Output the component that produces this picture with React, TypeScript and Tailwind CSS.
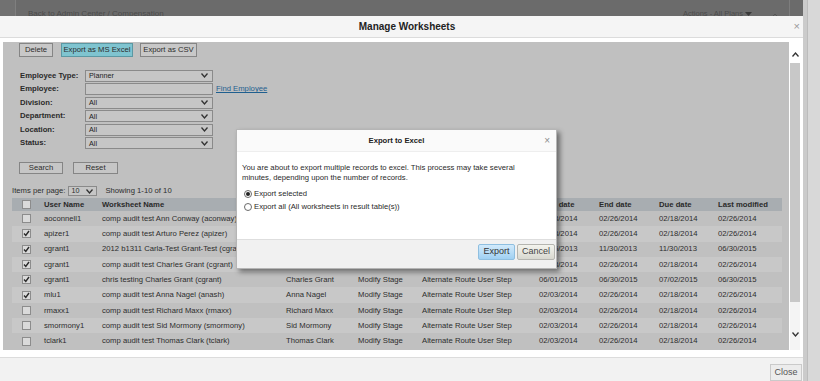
import React from "react";

const Chevron = ({ up = false, cls = "" }: { up?: boolean; cls?: string }) => (
  <svg width="7" height="5" viewBox="0 0 7 5" className={cls}>
    <polyline
      points={up ? "0.5,4.5 3.5,1 6.5,4.5" : "0.5,0.5 3.5,4 6.5,0.5"}
      fill="none"
      stroke="#333"
      strokeWidth="1.3"
    />
  </svg>
);

const Check = ({ checked }: { checked: boolean }) => (
  <div className="w-[9px] h-[9px] border border-[#8c8c8c] bg-[#dadada] flex items-center justify-center">
    {checked && (
      <svg width="7" height="7" viewBox="0 0 7 7">
        <polyline points="1,3.5 2.8,5.5 6,1" fill="none" stroke="#2a2a2a" strokeWidth="1.4" />
      </svg>
    )}
  </div>
);

const Select = ({ value, w = "w-[128px]", arrow = true }: { value: string; w?: string; arrow?: boolean }) => (
  <div className={`${w} h-[12px] border border-[#8a8a8a] bg-[#c6c6c6] flex items-center justify-between pl-[3px] pr-[4px]`}>
    <span className="text-[7.2px] text-[#222] leading-none">{value}</span>
    {arrow && <Chevron />}
  </div>
);

const rows = [
  ["aoconnell1", "comp audit test Ann Conway (aconway)", "Ann Conway", "02/03/2014", "02/26/2014", "02/18/2014", "02/26/2014", false],
  ["apizer1", "comp audit test Arturo Perez (apizer)", "Arturo Perez", "02/03/2014", "02/26/2014", "02/18/2014", "02/26/2014", true],
  ["cgrant1", "2012 b1311 Carla-Test Grant-Test (cgrant)", "Charles Grant", "01/16/2013", "11/30/2013", "11/30/2013", "06/30/2015", true],
  ["cgrant1", "comp audit test Charles Grant (cgrant)", "Charles Grant", "02/03/2014", "02/26/2014", "02/18/2014", "02/26/2014", true],
  ["cgrant1", "chris testing Charles Grant (cgrant)", "Charles Grant", "06/01/2015", "06/30/2015", "07/02/2015", "06/30/2015", true],
  ["mlu1", "comp audit test Anna Nagel (anash)", "Anna Nagel", "02/03/2014", "02/26/2014", "02/18/2014", "02/26/2014", true],
  ["rmaxx1", "comp audit test Richard Maxx (rmaxx)", "Richard Maxx", "02/03/2014", "02/26/2014", "02/18/2014", "02/26/2014", false],
  ["smormony1", "comp audit test Sid Mormony (smormony)", "Sid Mormony", "02/03/2014", "02/26/2014", "02/18/2014", "02/26/2014", false],
  ["tclark1", "comp audit test Thomas Clark (tclark)", "Thomas Clark", "02/03/2014", "02/26/2014", "02/18/2014", "02/26/2014", false],
] as const;

const formRows: [string, string | null][] = [
  ["Employee Type:", "Planner"],
  ["Employee:", null],
  ["Division:", "All"],
  ["Department:", "All"],
  ["Location:", "All"],
  ["Status:", "All"],
];

export default function App() {
  return (
    <div className="relative w-[820px] h-[381px] overflow-hidden flex bg-[#d6d6d6] font-['Liberation_Sans',Arial,sans-serif]">
      <div className="w-[803px] flex flex-col">
        {/* top dimmed page bar */}
        <div className="h-[19px] bg-[#6b6b6b] flex overflow-hidden">
          <div className="w-[16px] h-full bg-[#717171] border-r border-[#7f7f7f]" />
          <div className="flex-1 pl-[12px] pt-[9px] text-[8px] leading-[10px] text-[#4b4b4b] whitespace-nowrap">
            Back to Admin Center / Compensation
          </div>
          <div className="flex items-start pt-[9px] text-[7.5px] leading-[10px] text-[#4b4b4b] whitespace-nowrap">
            <span>Actions - All Plans</span>
            <svg width="7" height="5" viewBox="0 0 7 5" className="ml-[2px] mt-[3px]">
              <polygon points="0,0 7,0 3.5,4" fill="#3a3a3a" />
            </svg>
            <svg width="8" height="5" viewBox="0 0 8 5" className="ml-[19px] mt-[4px]">
              <polyline points="0.5,4.5 4,1 7.5,4.5" fill="none" stroke="#555" strokeWidth="1" />
            </svg>
          </div>
          <div className="w-[11px] h-full border-r border-[#7d7d7d]" />
          <div className="w-[13px] h-full" />
        </div>

        {/* Manage Worksheets modal */}
        <div className="flex-1 flex flex-col bg-white">
          <div className="h-[22px] bg-[#f5f5f5] border-b border-[#dcdcdc] grid grid-cols-[1fr_auto_1fr] items-center">
            <div />
            <div className="text-[10px] font-bold text-[#222] pl-[11px]">Manage Worksheets</div>
            <div className="justify-self-end pr-[3px] text-[11px] text-[#9a9a9a] leading-none">×</div>
          </div>

          <div className="h-[319px] flex pt-[4px] pl-[3px] pb-[7px]">
            {/* gray content panel */}
            <div className="w-[786px] h-[308px] bg-[#c0c0c0] overflow-hidden text-[7.7px] text-[#2d2d2d]">
              <div className="flex pt-[1px] pl-[16px] gap-[8px]">
                <div className="w-[34px] h-[14px] border border-[#858585] bg-[#c8c8c8] flex items-center justify-center">Delete</div>
                <div className="w-[72px] h-[14px] border border-[#5b98a3] bg-[#7fc4d0] flex items-center justify-center">Export as MS Excel</div>
                <div className="w-[57px] h-[14px] border border-[#858585] bg-[#c8c8c8] flex items-center justify-center -ml-[1px]">Export as CSV</div>
              </div>

              <div className="mt-[12px] flex flex-col">
                {formRows.map(([label, val]) => (
                  <div key={label} className="h-[13.5px] flex items-center">
                    <div className="w-[82px] pl-[17px] font-bold text-[#2a2a2a]">{label}</div>
                    {val === null ? (
                      <>
                        <Select value="" arrow={false} />
                        <span className="ml-[3px] text-[#1f5f8f] underline">Find Employee</span>
                      </>
                    ) : (
                      <Select value={val} />
                    )}
                  </div>
                ))}
              </div>

              <div className="mt-[12px] flex pl-[16px] gap-[10px]">
                <div className="w-[44px] h-[12px] border border-[#858585] bg-[#c6c6c6] flex items-center justify-center">Search</div>
                <div className="w-[45px] h-[12px] border border-[#858585] bg-[#c6c6c6] flex items-center justify-center">Reset</div>
              </div>

              <div className="mt-[12px] h-[10px] flex items-center pl-[9px]">
                <span>Items per page:</span>
                <div className="ml-[3px] w-[29px] h-[10px] border border-[#8a8a8a] bg-[#c6c6c6] flex items-center justify-between pl-[2px] pr-[3px]">
                  <span className="text-[7.2px] leading-none">10</span>
                  <Chevron />
                </div>
                <span className="ml-[8px]">Showing 1-10 of 10</span>
              </div>

              {/* table */}
              <div className="mt-[2px] ml-[9px] w-[770px]">
                <div className="h-[13px] bg-[#a8adb1] flex items-center font-bold text-[#2a2a2a]">
                  <div className="w-[32px] pl-[10px]"><Check checked={false} /></div>
                  <div className="w-[58px]">User Name</div>
                  <div className="w-[184px]">Worksheet Name</div>
                  <div className="w-[72px]" />
                  <div className="w-[64px]" />
                  <div className="w-[117px]" />
                  <div className="w-[60px]">Start date</div>
                  <div className="w-[60px]">End date</div>
                  <div className="w-[59px]">Due date</div>
                  <div className="w-[64px]">Last modified</div>
                </div>
                {rows.map((r, i) => (
                  <div key={i} className={`h-[15.3px] flex items-center whitespace-nowrap ${i % 2 === 1 ? "bg-[#c8c8c8]" : ""}`}>
                    <div className="w-[32px] pl-[10px]"><Check checked={r[7] as boolean} /></div>
                    <div className="w-[58px]">{r[0]}</div>
                    <div className="w-[184px]">{r[1]}</div>
                    <div className="w-[72px]">{r[2]}</div>
                    <div className="w-[64px]">Modify Stage</div>
                    <div className="w-[117px]">Alternate Route User Step</div>
                    <div className="w-[60px]">{r[3]}</div>
                    <div className="w-[60px]">{r[4]}</div>
                    <div className="w-[59px]">{r[5]}</div>
                    <div className="w-[64px]">{r[6]}</div>
                  </div>
                ))}
              </div>
            </div>

            {/* scrollbar */}
            <div className="ml-[1px] w-[10px] h-[308px] flex flex-col">
              <div className="h-[21px] flex items-end justify-center pb-[6px]">
                <Chevron up />
              </div>
              <div className="h-[239px] bg-[#c8c8c8]" />
              <div className="flex-1 bg-[#f4f4f4] flex items-end justify-center pb-[13px]">
                <Chevron />
              </div>
            </div>
          </div>

          <div className="flex-1 border-t border-[#dcdcdc] bg-[#f2f2f2] flex justify-end items-start pt-[6px] pr-[1px]">
            <div className="w-[32px] h-[17px] border border-[#cacaca] bg-[#ececec] flex items-center justify-center text-[9px] text-[#555]">
              Close
            </div>
          </div>
        </div>
      </div>

      {/* right page scrollbar strip */}
      <div className="flex-1 flex">
        <div className="w-[5px] bg-[#cbcbcb] border-r border-[#bcbcbc]" />
        <div className="flex-1 bg-[#d8d8d8]" />
      </div>

      {/* Export to Excel dialog */}
      <div className="absolute left-[236px] top-[129px] w-[321px] h-[140px] bg-white border border-[#b5b5b5] shadow-[3px_3px_5px_rgba(0,0,0,0.45)] flex flex-col text-[7.7px] text-[#2a2a2a]">
        <div className="h-[22px] grid grid-cols-[1fr_auto_1fr] items-center border-b border-[#eeeeee] bg-[#fafafa]">
          <div />
          <div className="font-bold text-[#222]">Export to Excel</div>
          <div className="justify-self-end pr-[6px] text-[10px] text-[#8c8c8c] leading-none">×</div>
        </div>
        <div className="flex-1 px-[5px] pt-[11px] leading-[9.5px]">
          <div>You are about to export multiple records to excel. This process may take several</div>
          <div>minutes, depending upon the number of records.</div>
          <div className="mt-[5px] flex flex-col">
            <label className="h-[13px] flex items-center pl-[2px]">
              <span className="w-[8px] h-[8px] rounded-full border border-[#6a6a6a] bg-white flex items-center justify-center">
                <span className="w-[4px] h-[4px] rounded-full bg-[#222]" />
              </span>
              <span className="ml-[2px]">Export selected</span>
            </label>
            <label className="h-[13px] flex items-center pl-[2px]">
              <span className="w-[8px] h-[8px] rounded-full border border-[#6a6a6a] bg-white" />
              <span className="ml-[2px]">Export all (All worksheets in result table(s))</span>
            </label>
          </div>
        </div>
        <div className="h-[29px] border-t border-[#dedede] bg-[#f1f1f1] flex justify-end items-start pt-[4px] pr-[1px] gap-[2px]">
          <div className="w-[37px] h-[16px] rounded-[2px] border border-[#8fbfe0] bg-gradient-to-b from-[#d2eafb] to-[#9fd0f2] flex items-center justify-center text-[9px] text-[#333]">
            Export
          </div>
          <div className="w-[38px] h-[16px] rounded-[2px] border border-[#b5b5b0] bg-gradient-to-b from-[#f4f4ee] to-[#d8d8d0] flex items-center justify-center text-[9px] text-[#444]">
            Cancel
          </div>
        </div>
      </div>
    </div>
  );
}
